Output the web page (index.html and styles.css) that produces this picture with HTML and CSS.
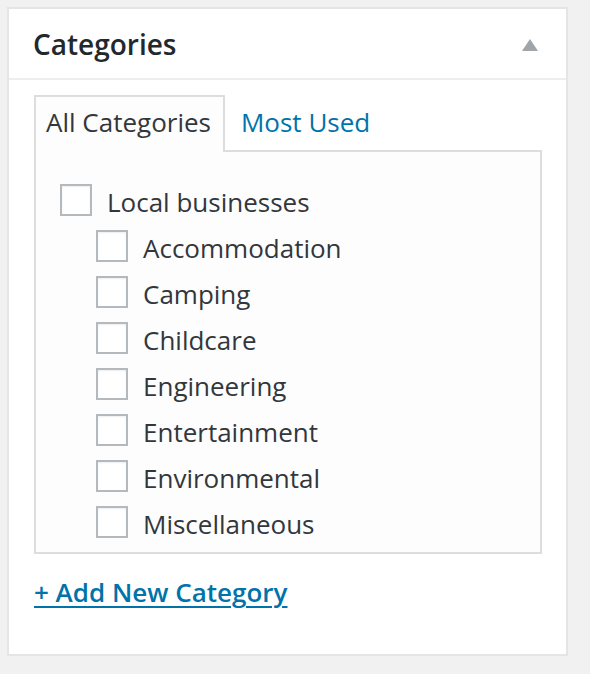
FILE: index.html
```html
<!DOCTYPE html>
<html>
<head>
<meta charset="utf-8">
<link rel="stylesheet" href="styles.css">
</head>
<body>
<div class="postbox">
  <div class="hndle">
    <h2 class="hndle-title">Categories</h2>
    <span class="toggle-arrow"></span>
  </div>
  <div class="inside">
    <ul class="category-tabs">
      <li class="tab active">All Categories</li>
      <li class="tab"><a href="#">Most Used</a></li>
    </ul>
    <div class="tabs-panel">
      <ul class="checklist">
        <li class="item"><span class="cb"></span><span class="lbl">Local businesses</span></li>
        <li class="item child"><span class="cb"></span><span class="lbl">Accommodation</span></li>
        <li class="item child"><span class="cb"></span><span class="lbl">Camping</span></li>
        <li class="item child"><span class="cb"></span><span class="lbl">Childcare</span></li>
        <li class="item child"><span class="cb"></span><span class="lbl">Engineering</span></li>
        <li class="item child"><span class="cb"></span><span class="lbl">Entertainment</span></li>
        <li class="item child"><span class="cb"></span><span class="lbl">Environmental</span></li>
        <li class="item child"><span class="cb"></span><span class="lbl">Miscellaneous</span></li>
      </ul>
    </div>
    <a class="add-new" href="#">+ Add New Category</a>
  </div>
</div>
</body>
</html>
```

FILE: styles.css
```css
html, body {
  margin: 0;
  padding: 0;
  background: #f1f1f1;
  font-family: "Open Sans", "Liberation Sans", sans-serif;
}

body {
  padding: 7px 0 0 7px;
}

.postbox {
  box-sizing: border-box;
  width: 561px;
  height: 649px;
  background: #fff;
  border: 2px solid #e5e5e5;
  box-shadow: 0 1px 1px rgba(0, 0, 0, 0.04);
}

.hndle {
  box-sizing: border-box;
  height: 71px;
  border-bottom: 2px solid #eee;
  display: flex;
  align-items: center;
  justify-content: space-between;
  padding: 0 28px 0 24px;
}

.hndle-title {
  margin: 0;
  font-size: 28px;
  font-weight: 600;
  color: #23282d;
  line-height: 1;
  padding-top: 1px;
}

.toggle-arrow {
  width: 0;
  height: 0;
  border-left: 8px solid transparent;
  border-right: 8px solid transparent;
  border-bottom: 12px solid #a0a5aa;
  margin-top: 2px;
}

.inside {
  padding: 15px 25px 0 25px;
}

.category-tabs {
  list-style: none;
  margin: 0;
  padding: 0;
  display: flex;
  align-items: flex-end;
  position: relative;
  z-index: 1;
}

.tab {
  font-size: 26px;
  line-height: 50px;
  height: 55px;
  padding: 0 12px 0 10px;
  border: 2px solid transparent;
  border-bottom: none;
  margin-right: 4px;
}

.tab a {
  color: #0073aa;
  text-decoration: none;
}

.tab.active {
  background: #fdfdfd;
  border-color: #ddd;
  color: #32373c;
}

.tabs-panel {
  box-sizing: border-box;
  width: 508px;
  height: 404px;
  margin-top: -2px;
  background: #fdfdfd;
  border: 2px solid #ddd;
  padding: 32px 0 0 24px;
}

.checklist {
  list-style: none;
  margin: 0;
  padding: 0;
}

.item {
  display: flex;
  height: 46px;
  align-items: flex-start;
}

.item.child {
  padding-left: 36px;
}

.cb {
  box-sizing: border-box;
  width: 32px;
  height: 32px;
  border: 2px solid #b4b9be;
  background: #fff;
  box-shadow: inset 0 1px 2px rgba(0, 0, 0, 0.07);
  flex: none;
}

.lbl {
  font-size: 26px;
  line-height: 32px;
  color: #32373c;
  margin-left: 15px;
  padding-top: 2px;
}

.add-new {
  display: inline-block;
  margin-top: 20px;
  font-size: 26px;
  font-weight: 600;
  line-height: 36px;
  color: #0073aa;
  text-decoration: underline;
  text-underline-offset: 4px;
  text-decoration-thickness: 2px;
}
```
